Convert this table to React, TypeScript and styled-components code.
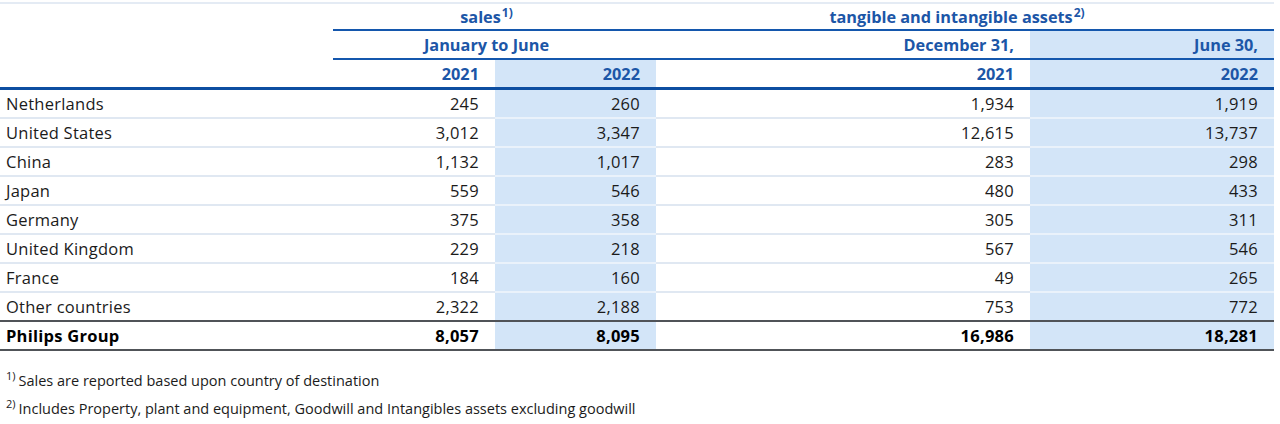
import React from "react";
import styled, { createGlobalStyle } from "styled-components";

const GlobalStyle = createGlobalStyle`
  body {
    margin: 0;
    background: #ffffff;
    font-family: "Open Sans", "Noto Sans", Arial, sans-serif;
    color: #1b1b1b;
  }
`;

const Page = styled.div`
  width: 1280px;
  padding-top: 2px;
`;

const Table = styled.div`
  display: grid;
  grid-template-columns: 333px 162px 161px 374px 244px;
  width: 1274px;
  border-top: 2px solid #e4ebf4;
`;

const HeadCell = styled.div<{ $span?: number; $shade?: boolean; $line?: "thin" | "thick" | "none"; $h: number }>`
  grid-column: span ${({ $span }) => $span ?? 1};
  height: ${({ $h }) => $h}px;
  box-sizing: border-box;
  display: flex;
  align-items: center;
  justify-content: ${({ $span }) => ($span && $span > 1 ? "center" : "flex-end")};
  padding-right: 16px;
  background: ${({ $shade }) => ($shade ? "#d3e5f8" : "transparent")};
  border-bottom: ${({ $line }) =>
    $line === "thick" ? "3px solid #0d4ea1" : $line === "thin" ? "2px solid #1457ad" : "none"};
  font-weight: 700;
  font-size: 16.3px;
  color: #1c56a7;
  white-space: nowrap;
`;

const Sup = styled.sup`
  font-size: 12px;
  line-height: 0;
  position: relative;
  top: -4px;
  margin-left: 1px;
`;

const Cell = styled.div<{ $shade?: boolean; $label?: boolean; $bold?: boolean; $rule: "light" | "dark" }>`
  height: 29px;
  box-sizing: border-box;
  display: flex;
  align-items: center;
  justify-content: ${({ $label }) => ($label ? "flex-start" : "flex-end")};
  padding: ${({ $label }) => ($label ? "0 0 0 6px" : "0 16px 0 0")};
  background: ${({ $shade }) => ($shade ? "#d3e5f8" : "transparent")};
  border-bottom: ${({ $rule, $shade }) =>
    $rule === "dark" ? "2px solid #505358" : `2px solid ${$shade ? "#eaf2fb" : "#e0e8f2"}`};
  font-size: 16.5px;
  letter-spacing: 0.25px;
  font-weight: ${({ $bold }) => ($bold ? 700 : 400)};
  color: ${({ $bold }) => ($bold ? "#000000" : "#1b1b1b")};
  white-space: nowrap;
`;

const Notes = styled.div`
  padding: 20px 0 0 6px;
  display: flex;
  flex-direction: column;
  gap: 9px;
  font-size: 14.5px;
  color: #1b1b1b;
`;

const Note = styled.div`
  line-height: 19px;
`;

const NoteMark = styled.sup`
  font-size: 11px;
  line-height: 0;
  margin-right: 3px;
`;

type Row = { name: string; v: [string, string, string, string]; bold?: boolean };

const rows: Row[] = [
  { name: "Netherlands", v: ["245", "260", "1,934", "1,919"] },
  { name: "United States", v: ["3,012", "3,347", "12,615", "13,737"] },
  { name: "China", v: ["1,132", "1,017", "283", "298"] },
  { name: "Japan", v: ["559", "546", "480", "433"] },
  { name: "Germany", v: ["375", "358", "305", "311"] },
  { name: "United Kingdom", v: ["229", "218", "567", "546"] },
  { name: "France", v: ["184", "160", "49", "265"] },
  { name: "Other countries", v: ["2,322", "2,188", "753", "772"] },
  { name: "Philips Group", v: ["8,057", "8,095", "16,986", "18,281"], bold: true },
];

const shaded = [false, true, false, true];

export default function App() {
  return (
    <Page>
      <GlobalStyle />
      <Table>
        <HeadCell $h={27} $line="none" />
        <HeadCell $h={27} $span={2} $line="thin">
          sales<Sup>1)</Sup>
        </HeadCell>
        <HeadCell $h={27} $span={2} $line="thin">
          tangible and intangible assets<Sup>2)</Sup>
        </HeadCell>

        <HeadCell $h={29} $line="none" />
        <HeadCell $h={29} $span={2} $line="thin">
          January to June
        </HeadCell>
        <HeadCell $h={29} $line="thin">December 31,</HeadCell>
        <HeadCell $h={29} $line="thin" $shade>
          June 30,
        </HeadCell>

        <HeadCell $h={30} $line="thick" />
        <HeadCell $h={30} $line="thick">2021</HeadCell>
        <HeadCell $h={30} $line="thick" $shade>
          2022
        </HeadCell>
        <HeadCell $h={30} $line="thick">2021</HeadCell>
        <HeadCell $h={30} $line="thick" $shade>
          2022
        </HeadCell>

        {rows.map((r, i) => {
          const rule = i >= rows.length - 2 ? "dark" : "light";
          return (
            <React.Fragment key={r.name}>
              <Cell $label $bold={r.bold} $rule={rule}>
                {r.name}
              </Cell>
              {r.v.map((val, j) => (
                <Cell key={j} $shade={shaded[j]} $bold={r.bold} $rule={rule}>
                  {val}
                </Cell>
              ))}
            </React.Fragment>
          );
        })}
      </Table>
      <Notes>
        <Note>
          <NoteMark>1)</NoteMark>Sales are reported based upon country of destination
        </Note>
        <Note>
          <NoteMark>2)</NoteMark>Includes Property, plant and equipment, Goodwill and Intangibles assets excluding goodwill
        </Note>
      </Notes>
    </Page>
  );
}
